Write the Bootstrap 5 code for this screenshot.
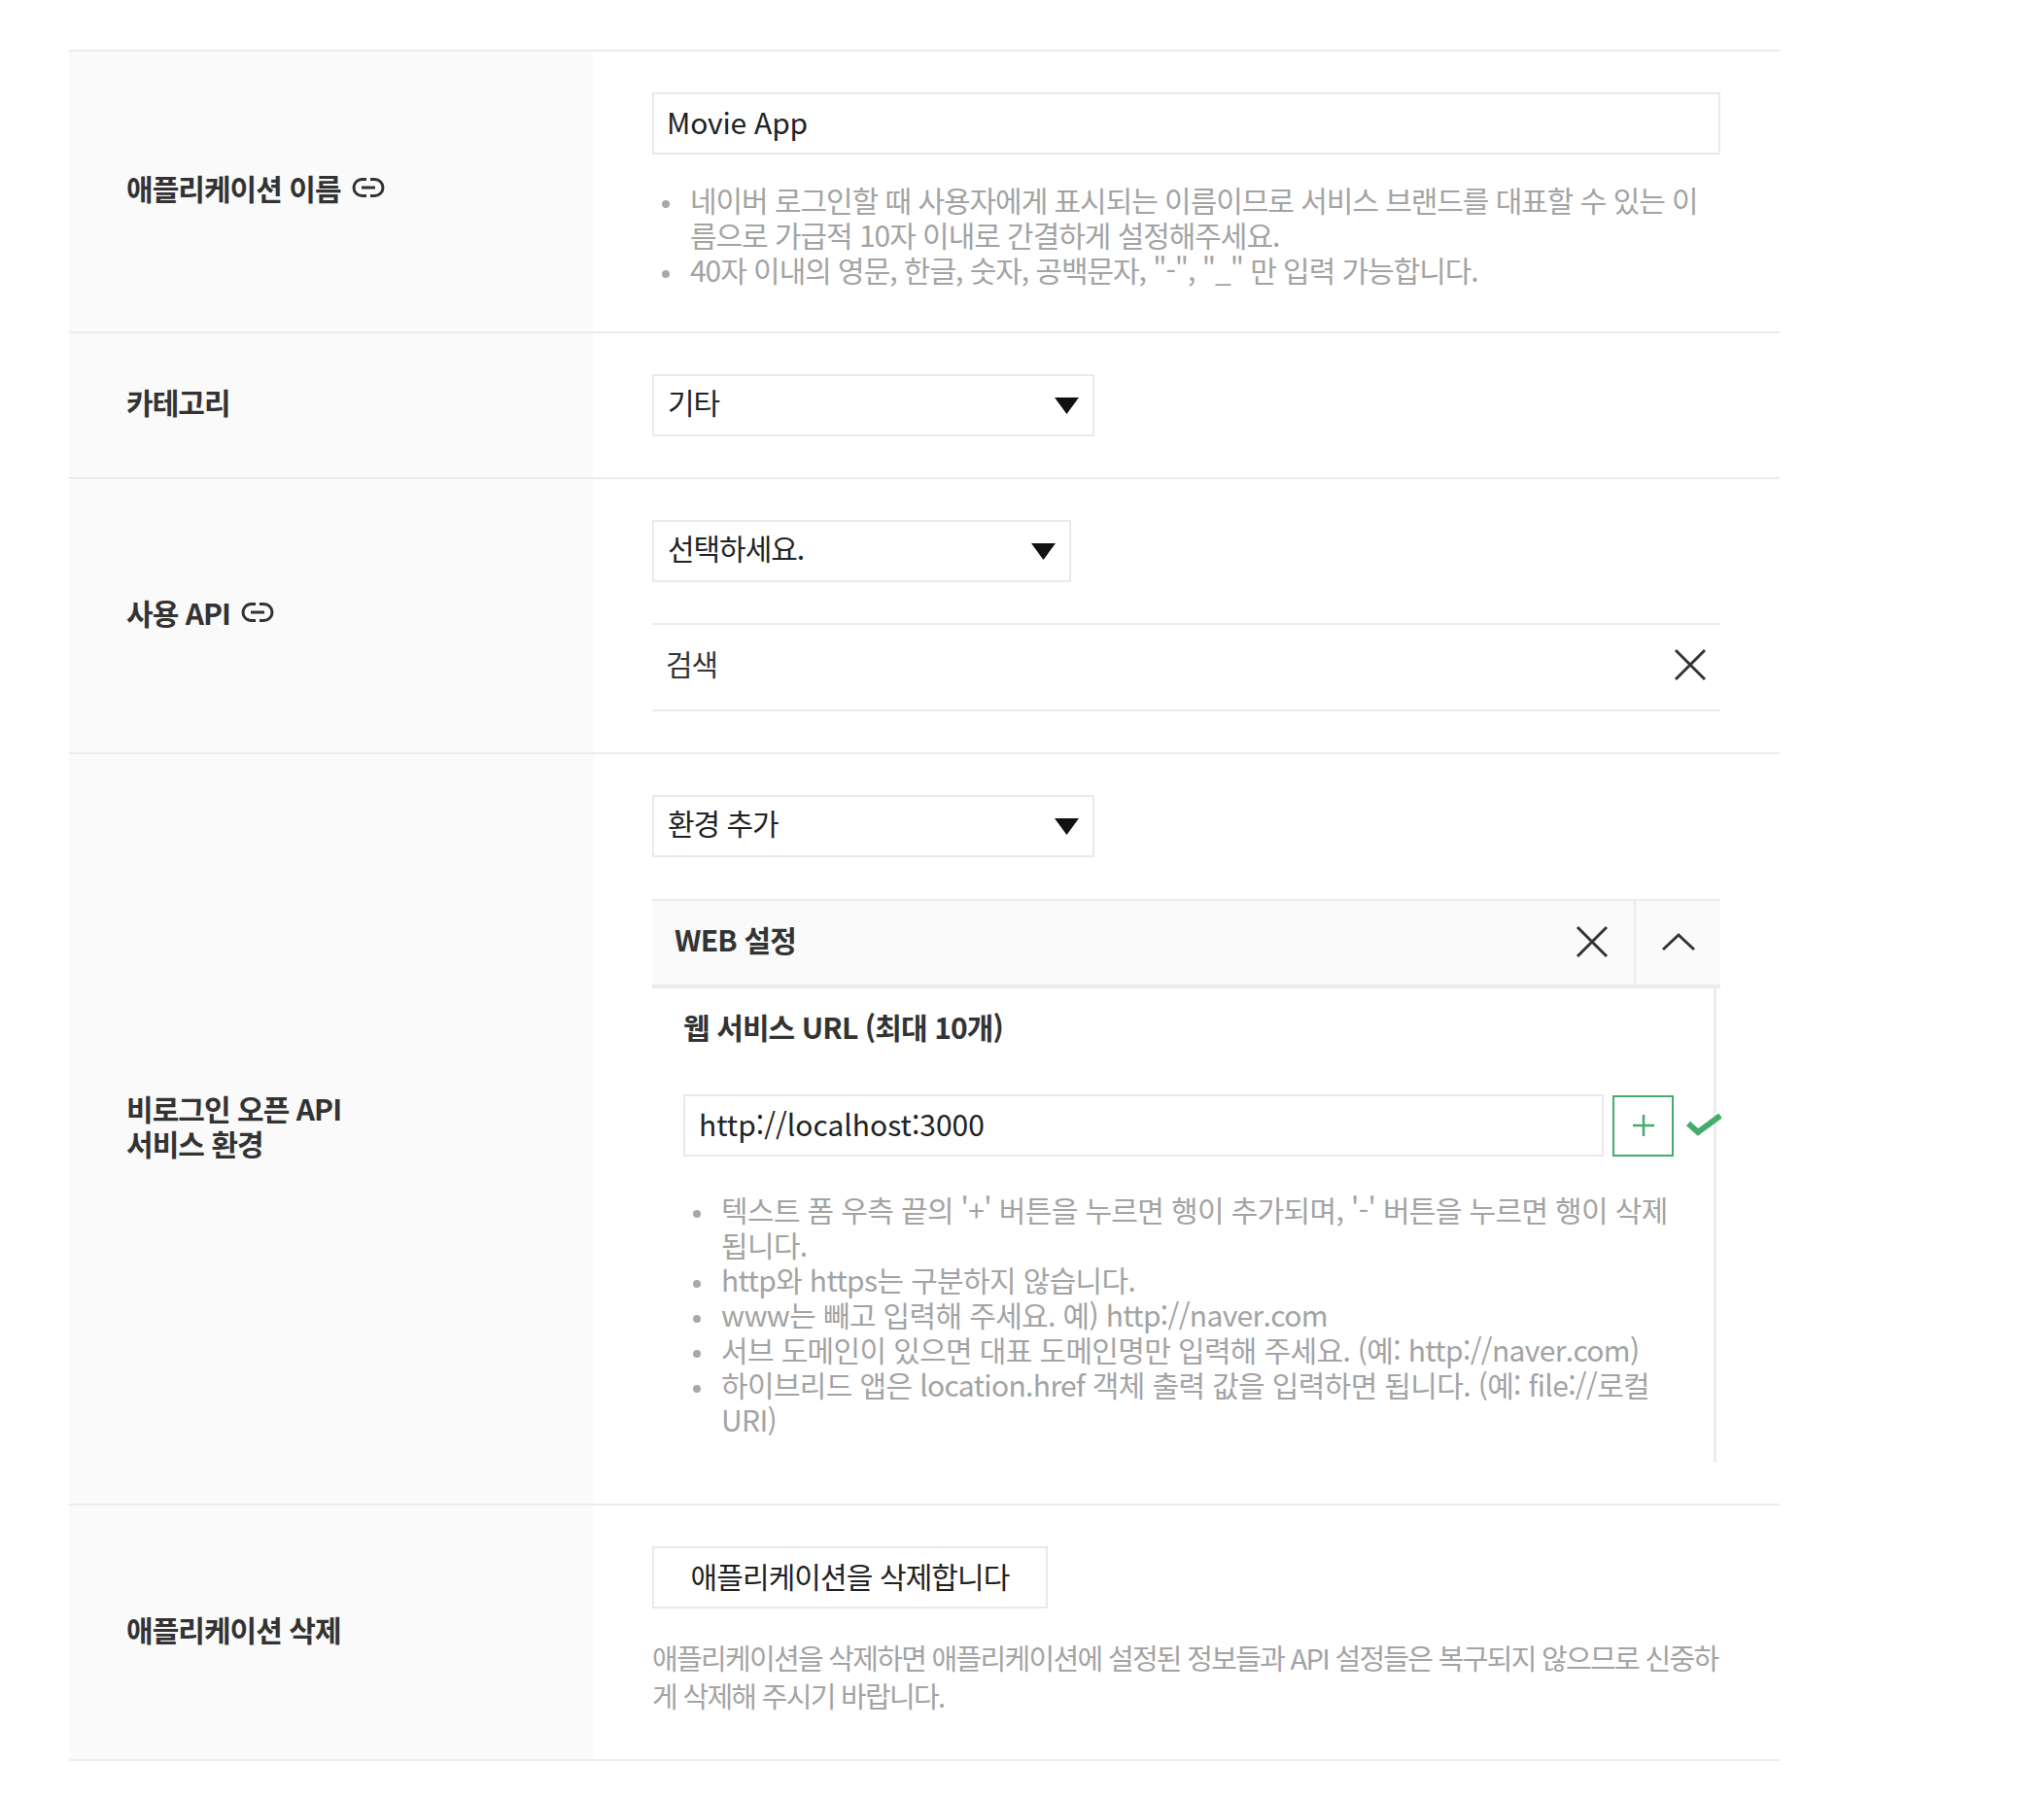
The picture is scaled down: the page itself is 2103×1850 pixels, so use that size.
<!DOCTYPE html>
<html lang="ko">
<head>
    <meta charset="UTF-8">
    <title>Movie App</title>
    <link href="https://cdn.jsdelivr.net/npm/bootstrap@5.3.0/dist/css/bootstrap.min.css" rel="stylesheet">
    <style>
        body {
            background: #fff;
            color: #333;
            font-family: "Noto Sans CJK KR", "Noto Sans", sans-serif;
            font-size: 30px;
            letter-spacing: -1.05px;
            line-height: 36px;
        }
        .app-form {
            width: 1760px;
            margin: 51px 0 0 71px;
            border-top: 2px solid #ececec;
        }
        .form-line {
            border-bottom: 2px solid #ececec;
        }
        .form-label-cell {
            width: 539px;
            flex: none;
            background: #fafafa;
            padding: 0 0 8px 59px;
            font-weight: 700;
            font-size: 30px;
            letter-spacing: -0.95px;
        }
        .form-body-cell {
            flex: 1;
            padding: 42px 61px 42px 61px;
            min-width: 0;
        }
        .link-ico { width: 34px; height: 22px; margin-left: 11px; flex: none; }
        .text-box {
            height: 64px;
            border: 2px solid #e9e9e9;
            padding: 0 13px;
            line-height: 56px;
            color: #222;
            background: #fff;
            letter-spacing: -0.2px;
        }
        .pick-box {
            height: 64px;
            border: 2px solid #e9e9e9;
            padding: 0 14px;
            color: #222;
        }
        .pick-text { margin-bottom: 9px; }
        .pick-wide { width: 455px; }
        .pick-narrow { width: 431px; }
        .hint-list {
            margin: 28px 0 4px 0;
            padding: 0 10px 0 39px;
            color: #a3a3a3;
            list-style: none;
        }
        .hint-list li::before {
            content: "";
            display: inline-block;
            width: 8px;
            height: 8px;
            margin: 0 21px 0 -29px;
            border-radius: 50%;
            background: #a8a8a8;
            vertical-align: middle;
        }
        .api-line {
            height: 91px;
            margin-top: 42px;
            padding: 0 14px;
            border-top: 2px solid #ececec;
            border-bottom: 2px solid #ececec;
        }
        .api-text { margin-bottom: 9px; }
        .x-ico { width: 34px; height: 34px; }
        .api-x { margin-bottom: 6px; }
        .env-head {
            height: 92px;
            margin-top: 43px;
            background: #fafafa;
            border-top: 2px solid #ececec;
            border-bottom: 4px solid #ececec;
            padding-left: 23px;
            font-weight: 700;
            letter-spacing: -0.8px;
        }
        .head-text { margin-bottom: 8px; }
        .head-x { padding: 0 26px 3px 0; }
        .head-up {
            width: 89px;
            height: 100%;
            padding-bottom: 3px;
            border-left: 2px solid #ececec;
        }
        .env-panel {
            width: 1095px;
            height: 488px;
            padding: 21px 0 0 32px;
            border-right: 3px solid #ececec;
        }
        .panel-title { font-weight: 700; height: 70px; letter-spacing: -0.9px; }
        .url-row { margin-top: 18px; }
        .url-input { width: 947px; flex: none; padding-left: 14px; letter-spacing: 0; }
        .add-btn {
            width: 63px;
            height: 63px;
            margin-left: 9px;
            border: 2px solid #43ad6a;
            flex: none;
        }
        .plus-ico { width: 24px; height: 24px; }
        .check-ico { width: 36px; height: 26px; margin-left: 13px; margin-bottom: 4px; flex: none; }
        .panel-hints { margin-top: 36px; width: 1027px; padding-right: 0; letter-spacing: -0.65px; }
        .plain-btn {
            width: 407px;
            height: 64px;
            border: 2px solid #e9e9e9;
            color: #222;
            line-height: 56px;
            text-align: center;
            letter-spacing: -0.9px;
        }
        .warn-text {
            margin: 31px 0 4px 0;
            color: #a3a3a3;
            font-size: 29px;
            line-height: 39px;
            letter-spacing: -1.7px;
        }
    </style>
</head>
<body>

    <div class="app-form">
        <!-- name -->
        <div class="form-line d-flex">
            <div class="form-label-cell d-flex align-items-center">애플리케이션 이름
                <svg class="link-ico" viewBox="0 0 34 22" fill="none" stroke="#333" stroke-width="3"><path d="M15 2.5H10.5a8.5 8.5 0 0 0 0 17H15M19 2.5h4.5a8.5 8.5 0 0 1 0 17H19M10 11h14"/></svg>
            </div>
            <div class="form-body-cell">
                <div class="text-box">Movie App</div>
                <ul class="hint-list">
                    <li>네이버 로그인할 때 사용자에게 표시되는 이름이므로 서비스 브랜드를 대표할 수 있는 이름으로 가급적 10자 이내로 간결하게 설정해주세요.</li>
                    <li>40자 이내의 영문, 한글, 숫자, 공백문자, "-", "_" 만 입력 가능합니다.</li>
                </ul>
            </div>
        </div>
        <!-- category -->
        <div class="form-line d-flex">
            <div class="form-label-cell d-flex align-items-center">카테고리</div>
            <div class="form-body-cell">
                <div class="pick-box pick-wide d-flex justify-content-between align-items-center">
                    <span class="pick-text">기타</span>
                    <svg width="25" height="17" viewBox="0 0 25 17"><path d="M0 0h25L12.500 17z" fill="#111"/></svg>
                </div>
            </div>
        </div>
        <!-- api -->
        <div class="form-line d-flex">
            <div class="form-label-cell d-flex align-items-center">사용 API
                <svg class="link-ico" viewBox="0 0 34 22" fill="none" stroke="#333" stroke-width="3"><path d="M15 2.5H10.5a8.5 8.5 0 0 0 0 17H15M19 2.5h4.5a8.5 8.5 0 0 1 0 17H19M10 11h14"/></svg>
            </div>
            <div class="form-body-cell">
                <div class="pick-box pick-narrow d-flex justify-content-between align-items-center">
                    <span class="pick-text">선택하세요.</span>
                    <svg width="25" height="17" viewBox="0 0 25 17"><path d="M0 0h25L12.500 17z" fill="#111"/></svg>
                </div>
                <div class="api-line d-flex justify-content-between align-items-center">
                    <span class="api-text">검색</span>
                    <svg class="x-ico api-x" viewBox="0 0 34 34" stroke="#333" stroke-width="3"><path d="M2 2l30 30M32 2L2 32"/></svg>
                </div>
            </div>
        </div>
        <!-- env -->
        <div class="form-line d-flex">
            <div class="form-label-cell d-flex align-items-center">비로그인 오픈 API<br>서비스 환경</div>
            <div class="form-body-cell">
                <div class="pick-box pick-wide d-flex justify-content-between align-items-center">
                    <span class="pick-text">환경 추가</span>
                    <svg width="25" height="17" viewBox="0 0 25 17"><path d="M0 0h25L12.500 17z" fill="#111"/></svg>
                </div>
                <div class="env-head d-flex justify-content-between align-items-center">
                    <span class="head-text">WEB 설정</span>
                    <div class="d-flex align-items-center h-100">
                        <div class="head-x d-flex"><svg class="x-ico" viewBox="0 0 34 34" stroke="#333" stroke-width="3"><path d="M2 2l30 30M32 2L2 32"/></svg></div>
                        <div class="head-up d-flex align-items-center justify-content-center">
                            <svg width="34" height="20" viewBox="0 0 34 20" fill="none" stroke="#333" stroke-width="3"><path d="M1 18L17 3l16 15"/></svg>
                        </div>
                    </div>
                </div>
                <div class="env-panel">
                    <div class="panel-title">웹 서비스 URL (최대 10개)</div>
                    <div class="url-row d-flex align-items-center">
                        <div class="text-box url-input">http://localhost:3000</div>
                        <div class="add-btn d-flex align-items-center justify-content-center">
                            <svg class="plus-ico" viewBox="0 0 24 24" stroke="#43ad6a" stroke-width="2.500"><path d="M12 1v22M1 12h22"/></svg>
                        </div>
                        <svg class="check-ico" viewBox="0 0 36 26" fill="none" stroke="#43ad6a" stroke-width="6"><path d="M2 13l10 9L35 5"/></svg>
                    </div>
                    <ul class="hint-list panel-hints">
                        <li>텍스트 폼 우측 끝의 '+' 버튼을 누르면 행이 추가되며, '-' 버튼을 누르면 행이 삭제됩니다.</li>
                        <li>http와 https는 구분하지 않습니다.</li>
                        <li>www는 빼고 입력해 주세요. 예) http://naver.com</li>
                        <li>서브 도메인이 있으면 대표 도메인명만 입력해 주세요. (예: http://naver.com)</li>
                        <li>하이브리드 앱은 location.href 객체 출력 값을 입력하면 됩니다. (예: file://로컬 URI)</li>
                    </ul>
                </div>
            </div>
        </div>
        <!-- delete -->
        <div class="form-line d-flex">
            <div class="form-label-cell d-flex align-items-center">애플리케이션 삭제</div>
            <div class="form-body-cell">
                <div class="plain-btn">애플리케이션을 삭제합니다</div>
                <p class="warn-text">애플리케이션을 삭제하면 애플리케이션에 설정된 정보들과 API 설정들은 복구되지 않으므로 신중하게 삭제해 주시기 바랍니다.</p>
            </div>
        </div>
    </div>

<script src="https://cdn.jsdelivr.net/npm/bootstrap@5.3.0/dist/js/bootstrap.bundle.min.js"></script>
</body>
</html>
